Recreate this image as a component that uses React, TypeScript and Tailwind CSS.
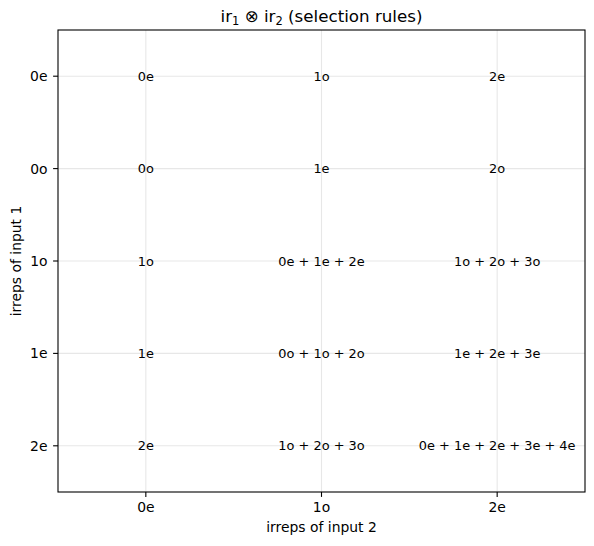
const cols = ["0e", "1o", "2e"];
const rows = ["0e", "0o", "1o", "1e", "2e"];

const cells: string[][] = [
  ["0e", "1o", "2e"],
  ["0o", "1e", "2o"],
  ["1o", "0e + 1e + 2e", "1o + 2o + 3o"],
  ["1e", "0o + 1o + 2o", "1e + 2e + 3e"],
  ["2e", "1o + 2o + 3o", "0e + 1e + 2e + 3e + 4e"],
];

// axes box in pixels
const left = 58;
const right = 585;
const top = 30;
const bottom = 492;
const xAt = (i: number) => left + ((i + 0.5) * (right - left)) / cols.length;
const yAt = (j: number) => top + ((j + 0.5) * (bottom - top)) / rows.length;

const font = "'DejaVu Sans', sans-serif";

const App = () => {
  return (
    <div className="w-[594px] h-[546px] bg-white">
      <svg width={594} height={546} viewBox="0 0 594 546" className="block" style={{ fontFamily: font }}>
        {/* grid */}
        {cols.map((_, i) => (
          <line key={`gx${i}`} x1={xAt(i)} x2={xAt(i)} y1={top} y2={bottom} stroke="#e7e7e7" strokeWidth={1.1} />
        ))}
        {rows.map((_, j) => (
          <line key={`gy${j}`} x1={left} x2={right} y1={yAt(j)} y2={yAt(j)} stroke="#e7e7e7" strokeWidth={1.1} />
        ))}

        {/* cell texts */}
        {cells.map((row, j) =>
          row.map((txt, i) => (
            <text
              key={`c${j}-${i}`}
              x={xAt(i)}
              y={yAt(j)}
              fontSize={12.9}
              textAnchor="middle"
              dominantBaseline="central"
              fill="#000"
            >
              {txt}
            </text>
          ))
        )}

        {/* spines */}
        <rect x={left} y={top} width={right - left} height={bottom - top} fill="none" stroke="#000" strokeWidth={1.1} />

        {/* ticks + labels */}
        {cols.map((c, i) => (
          <g key={`tx${i}`}>
            <line x1={xAt(i)} x2={xAt(i)} y1={bottom} y2={bottom + 4.9} stroke="#000" strokeWidth={1.1} />
            <text x={xAt(i)} y={bottom + 20} fontSize={13.9} textAnchor="middle" fill="#000">
              {c}
            </text>
          </g>
        ))}
        {rows.map((r, j) => (
          <g key={`ty${j}`}>
            <line x1={left - 4.9} x2={left} y1={yAt(j)} y2={yAt(j)} stroke="#000" strokeWidth={1.1} />
            <text x={left - 10.5} y={yAt(j)} fontSize={13.9} textAnchor="end" dominantBaseline="central" fill="#000">
              {r}
            </text>
          </g>
        ))}

        {/* axis labels */}
        <text x={(left + right) / 2} y={532} fontSize={13.9} textAnchor="middle" fill="#000">
          irreps of input 2
        </text>
        <text
          x={20.5}
          y={(top + bottom) / 2}
          fontSize={13.9}
          textAnchor="middle"
          fill="#000"
          transform={`rotate(-90 20.5 ${(top + bottom) / 2})`}
        >
          irreps of input 1
        </text>

        {/* title */}
        <text x={(left + right) / 2} y={21.7} fontSize={16.7} textAnchor="middle" fill="#000">
          <tspan>ir</tspan>
          <tspan fontSize={11.5} dy={3}>1</tspan>
          <tspan dy={-3}> ⊗ ir</tspan>
          <tspan fontSize={11.5} dy={3}>2</tspan>
          <tspan dy={-3}> (selection rules)</tspan>
        </text>
      </svg>
    </div>
  );
};

export default App;
